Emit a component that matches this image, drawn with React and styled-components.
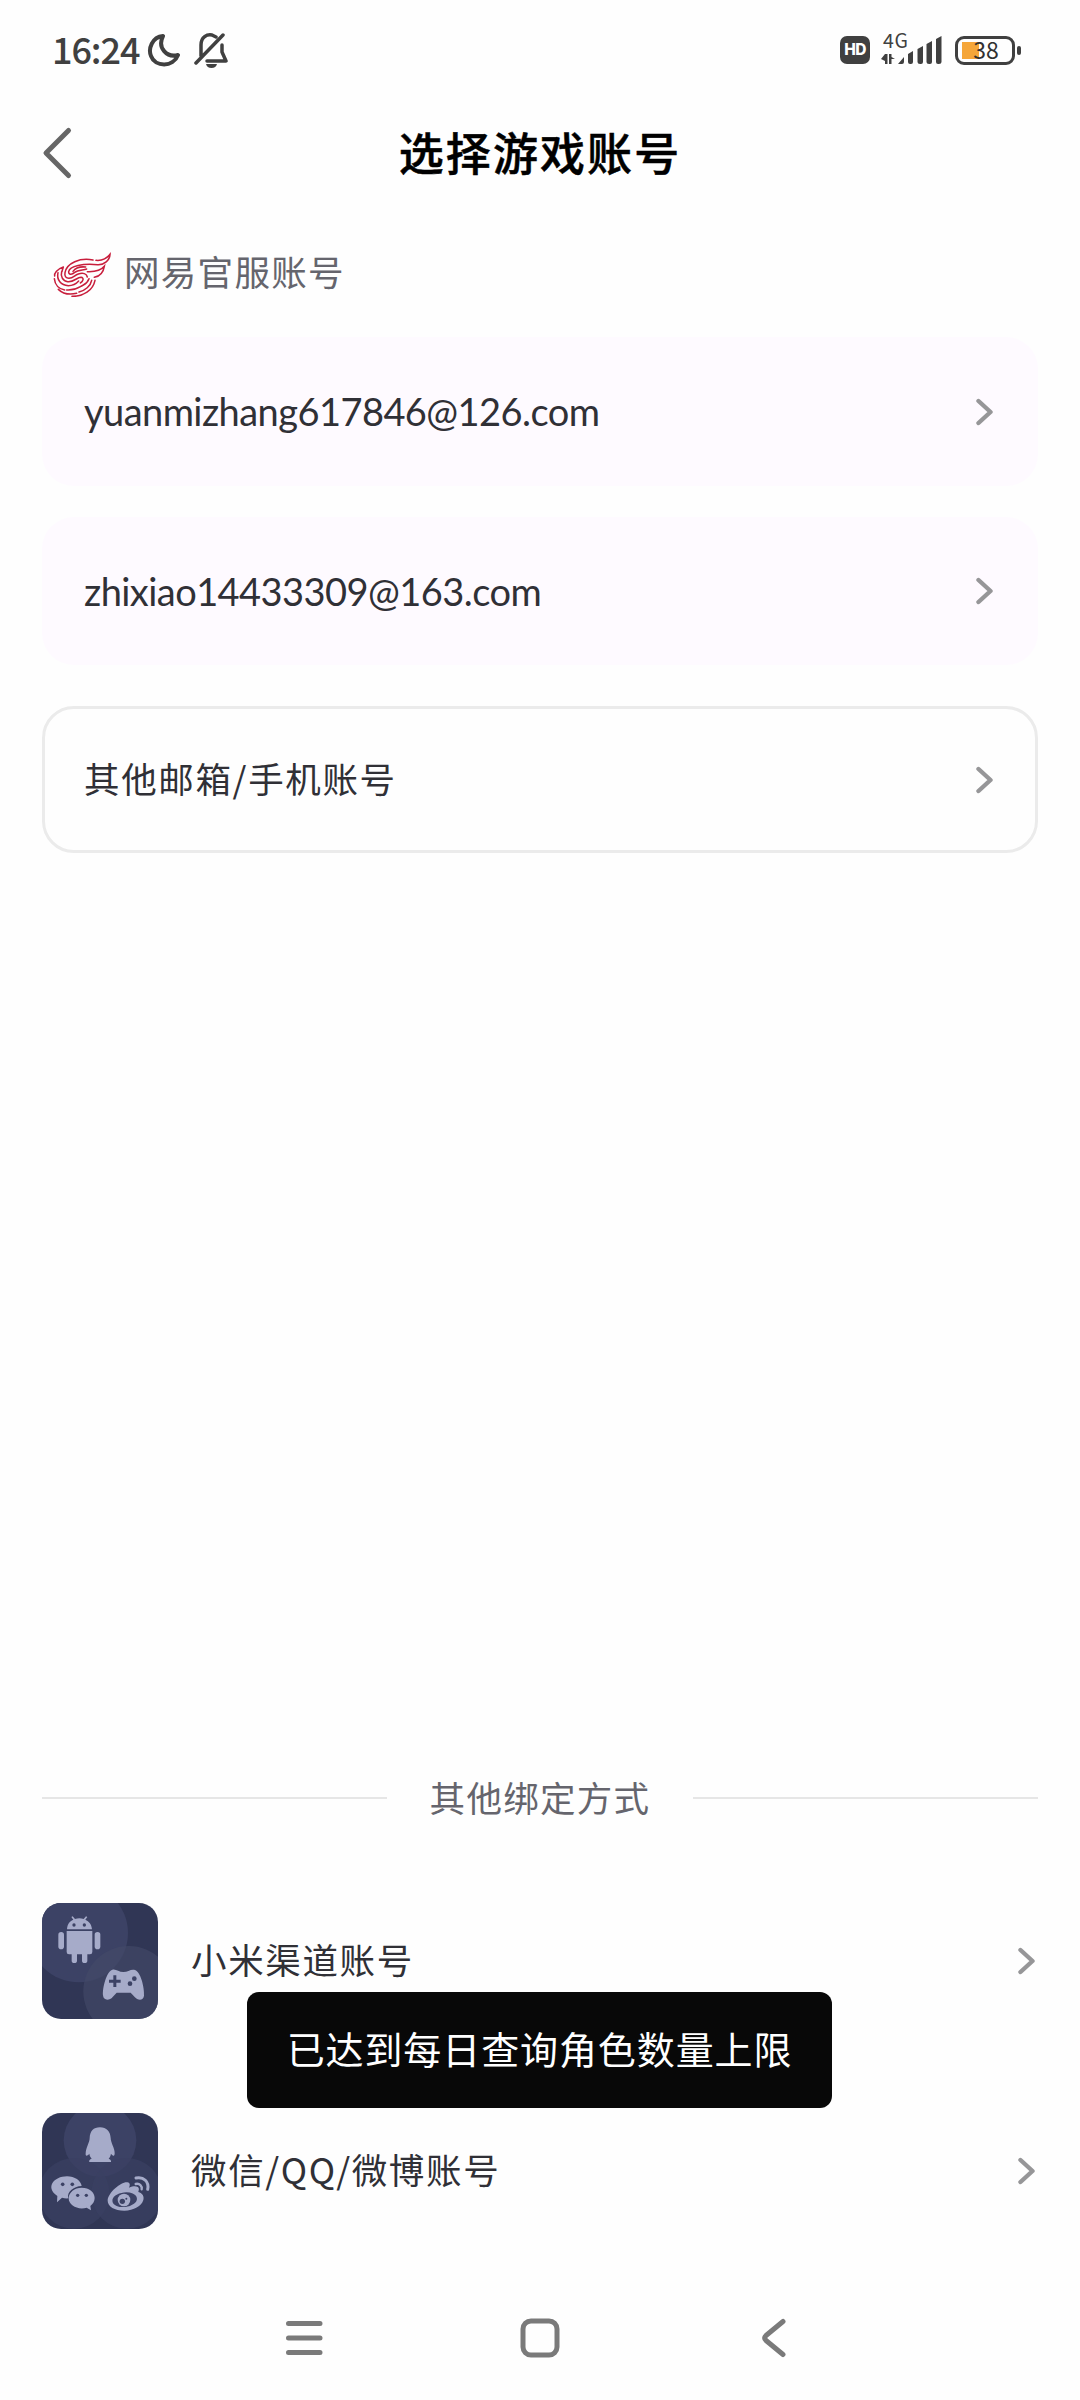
import React from "react";
import styled, { createGlobalStyle } from "styled-components";

const GlobalStyle = createGlobalStyle`
  * { box-sizing: border-box; }
  body {
    margin: 0;
    background: #fefefe;
    font-family: Lato, "Noto Sans CJK SC", sans-serif;
    color: #303036;
  }
`;

const Screen = styled.div`
  position: relative;
  display: flex;
  flex-direction: column;
  width: 1080px;
  height: 2400px;
  overflow: hidden;
  background: #fefefe;
`;

const StatusBar = styled.header`
  display: flex;
  align-items: center;
  justify-content: space-between;
  height: 100px;
  padding: 0 59px 0 52px;
  color: #404040;
`;

const StatusGroup = styled.div`
  display: flex;
  align-items: center;
`;

const Clock = styled.span`
  width: 95px;
  margin-top: -4px;
  font: 500 36px/44px "Noto Sans CJK SC", sans-serif;
  letter-spacing: -1.1px;
  white-space: nowrap;
`;

const StatusIcon = styled.svg`
  flex: none;
  width: ${(p) => p.$w}px;
  height: ${(p) => p.$h}px;
  margin-left: ${(p) => p.$ml || 0}px;
`;

const HdBadge = styled.span`
  display: flex;
  align-items: center;
  justify-content: center;
  width: 30px;
  height: 28px;
  margin-left: -1px;
  border-radius: 7px;
  background: #404040;
  color: #fff;
  font: 800 15.5px/28px Inter, sans-serif;
  letter-spacing: -0.6px;
`;

const Signal = styled.div`
  display: flex;
  flex-direction: column;
  width: 61px;
  height: 36px;
  margin: 0 13px 0 11px;
`;

const NetworkLabel = styled.span`
  height: 3px;
  margin-top: -2px;
  margin-bottom: 2px;
  padding-left: 2px;
  font: 400 19.5px/19px "Noto Sans CJK SC", sans-serif;
  letter-spacing: 0.6px;
`;

const Battery = styled.div`
  display: flex;
  align-items: center;
`;

const BatteryBody = styled.div`
  display: flex;
  align-items: center;
  justify-content: center;
  width: 60px;
  height: 29px;
  padding: 0 0 2px 2px;
  border: 3px solid #404040;
  border-radius: 9px;
  background: linear-gradient(#f5a63a, #f5a63a) 4px 3px / 17px 17px no-repeat;
  color: #303030;
  font: 400 23px/21px "Noto Sans CJK SC", sans-serif;
`;

const BatteryTip = styled.span`
  width: 4px;
  height: 9px;
  margin-left: 2px;
  border-radius: 2px;
  background: #404040;
`;

const TitleBar = styled.div`
  display: grid;
  grid-template-columns: 120px 1fr 120px;
  align-items: center;
  height: 106px;
  padding: 0 40px;
`;

const Title = styled.h1`
  margin: -3px 0 0;
  text-align: center;
  color: #000;
  font: 500 45px/60px "Noto Sans CJK SC", sans-serif;
  letter-spacing: 2.1px;
  -webkit-text-stroke: 0.5px #000;
`;

const SectionHead = styled.div`
  display: flex;
  align-items: center;
  height: 130px;
  padding: 6px 0 0 52px;
`;

const SectionTitle = styled.h2`
  margin: -7px 0 0 12px;
  color: #65656d;
  font: 400 35.5px/50px "Noto Sans CJK SC", sans-serif;
  letter-spacing: 1.3px;
`;

const Accounts = styled.main`
  display: flex;
  flex-direction: column;
  padding: 1px 42px 0;
  height: 1412px;
`;

const Card = styled.div`
  display: flex;
  align-items: center;
  justify-content: space-between;
  height: ${(p) => p.$h}px;
  margin-bottom: ${(p) => p.$gap || 0}px;
  padding: ${(p) => (p.$outlined ? "0 39px" : "0 42px")};
  border: ${(p) => (p.$outlined ? "3px solid #ebebeb" : "0")};
  border-radius: 32px;
  background: ${(p) => (p.$outlined ? "#fefefe" : "#fefaff")};
`;

const Email = styled.span`
  margin-top: -1px;
  font: 400 38px/50px Lato, sans-serif;
  letter-spacing: -0.55px;
  white-space: nowrap;
`;

const Label = styled.span`
  margin-top: -4px;
  font: 400 35.5px/50px "Noto Sans CJK SC", sans-serif;
  letter-spacing: 1.65px;
  white-space: nowrap;
`;

const Divider = styled.div`
  display: flex;
  align-items: center;
  justify-content: space-between;
  height: 100px;
  padding: 0 42px;
`;

const Rule = styled.span`
  width: 345px;
  height: 2px;
  background: #e6e6e6;
`;

const DividerText = styled(Label)`
  margin-top: -2px;
  color: #65656d;
  letter-spacing: 1.3px;
`;

const Methods = styled.section`
  display: flex;
  flex-direction: column;
  gap: 94px;
  padding: 55px 42px 0;
`;

const Method = styled.div`
  display: flex;
  align-items: center;
  height: 116px;
`;

const Tile = styled.svg`
  flex: none;
  width: 116px;
  height: 116px;
  margin-right: 33px;
  border-radius: 19px;
  background: #303655;
`;

const MethodLabel = styled(Label)`
  flex: 1;
`;

const Toast = styled.div`
  position: absolute;
  left: 247px;
  top: 1992px;
  display: flex;
  align-items: center;
  justify-content: center;
  width: 585px;
  height: 116px;
  padding-bottom: 4px;
  border-radius: 12px;
  background: #080808;
  color: #fff;
  font: 400 38px/56px "Noto Sans CJK SC", sans-serif;
  letter-spacing: 0.9px;
  white-space: nowrap;
`;

const NavBar = styled.nav`
  display: grid;
  grid-template-columns: 236px 1fr 30px;
  align-items: center;
  height: 124px;
  margin-top: auto;
  padding: 0 291px 0 283px;
`;

const Chevron = () => (
  <StatusIcon $w={20} $h={30} viewBox="0 0 20 30" fill="none" stroke="#969698" strokeWidth="4.4" strokeLinecap="round" strokeLinejoin="round">
    <path d="M2.500 4 14.500 15 2.500 26" />
  </StatusIcon>
);

const FlameLogo = () => (
  <StatusIcon $w={60} $h={46} viewBox="64 36 180 138" fill="none" stroke="#c81e3c" strokeWidth="4.600" strokeLinecap="round">
    <path d="M187 63C148 55 108 72 103 101C101 112 106 118 115 118C128 118 131 109 143 105C157 100 168 104 170 114" />
    <path d="M98 84C78 91 70 104 72 111M98 84L94 97" />
    <path d="M196 64C216 66 230 56 238 46C237 64 221 78 201 77C157 73 117 80 114 98C113 108 124 108 132 100C142 92 158 94 168 90" />
    <path d="M127 97C134 87 145 82 165 84" />
    <path d="M170 98C194 99 213 92 221 82C218 100 208 112 191 115" />
    <path d="M93 98C89 112 96 126 111 128C130 130 138 115 151 115C161 116 158 127 149 132" />
    <path d="M82 101C77 123 91 139 113 140C129 140 137 134 144 126" />
    <path d="M71 119C73 139 86 151 102 153M108 153C137 155 145 144 158 138C167 133 173 125 175 119" />
    <path d="M83 151C96 164 116 168 138 163" />
    <path d="M145 159C163 155 180 141 183 124" />
    <path d="M124 172C158 173 187 154 193 124" />
  </StatusIcon>
);

const ChannelTile = () => (
  <Tile viewBox="0 0 348 348">
    <circle cx="110" cy="90" r="148" fill="#3c4265" />
    <circle cx="260" cy="265" r="136" fill="#434969" fillOpacity=".65" />
    <g fill="#a6abc9">
      <path d="M75 79C76 61 85 54 94 50L88 42 92 40 99 48Q112 44 125 48L132 40 136 42 130 50C141 55 149 63 150 79Z" />
      <path d="M74 84H151V147Q151 154 144 154H136V173Q136 180 128 180T120 173V154H105V173Q105 180 97 180T89 173V154H81Q74 154 74 147Z" />
      <rect x="49" y="87" width="17" height="52" rx="8.500" />
      <rect x="158" y="87" width="17" height="52" rx="8.500" />
      <path d="M211 200C222 197 230 207 244 207S267 197 279 201C295 205 308 254 306 278C304 295 286 292 278 282L266 269H224L212 282C203 293 184 294 183 277C181 254 194 204 211 200Z" />
    </g>
    <g fill="#3c4265">
      <circle cx="96" cy="66" r="5" /><circle cx="127" cy="66" r="5" />
      <path d="M214 217h9v13h13v9h-13v13h-9v-13h-13v-9h13z" />
      <circle cx="277" cy="227" r="7" /><circle cx="264" cy="242" r="7" />
    </g>
  </Tile>
);

const SocialTile = () => (
  <Tile viewBox="0 0 348 348">
    <circle cx="174" cy="82" r="109" fill="#3c4265" />
    <circle cx="96" cy="241" r="106" fill="#3a4063" fillOpacity=".7" />
    <circle cx="254" cy="241" r="106" fill="#3a4063" fillOpacity=".7" />
    <g fill="#a6abc9">
      <path d="M174 43C194 43 205 56 206 75C206 89 218 105 218 121C218 130 214 131 207 122C206 130 202 134 200 137C207 140 208 144 207 147H142C140 143 143 139 149 137C145 132 143 128 142 122C134 131 130 129 131 121C131 105 143 88 143 75C144 55 154 43 174 43Z" />
      <path d="M75 190C98 190 117 203 119 219C94 220 74 237 79 256Q69 257 60 254L45 268 46 249C9 224 35 190 75 190Z" />
      <path d="M119 224C142 224 158 238 158 255C158 265 153 273 145 279L147 292 134 284C109 292 80 278 80 256C80 238 98 224 119 224Z" />
      <path d="M256 208C266 209 264 219 261 224C276 217 287 219 290 225C292 230 289 234 289 237C302 241 307 250 304 261C299 279 275 293 247 293C218 293 197 280 197 263C198 238 239 205 256 208Z" />
    </g>
    <g fill="#3c4265">
      <circle cx="62" cy="214" r="5.500" /><circle cx="91" cy="214" r="5.500" />
      <circle cx="107" cy="247" r="5" /><circle cx="133" cy="247" r="5" />
      <ellipse cx="248" cy="260" rx="37" ry="22" transform="rotate(-7 248 260)" />
    </g>
    <circle cx="246" cy="261" r="19" fill="#a6abc9" />
    <circle cx="241" cy="265" r="8" fill="#3c4265" />
    <circle cx="253" cy="257" r="3" fill="#3c4265" />
    <g fill="none" stroke="#a6abc9" strokeLinecap="round" strokeWidth="9">
      <path d="M282 195C305 190 322 207 317 229" />
      <path d="M281 213C293 210 301 219 299 229" strokeWidth="7" />
    </g>
  </Tile>
);

export default function App() {
  return (
    <>
      <GlobalStyle />
      <Screen>
        <StatusBar>
          <StatusGroup>
            <Clock>16:24</Clock>
            <StatusIcon $w={34} $h={36} viewBox="0 0 34 36" fill="none" stroke="#404040" strokeWidth="4" strokeLinejoin="round">
              <path d="M16 4C5 5 1 17 4 24C8 35 26 36 31 23C20 26 10 16 16 4Z" />
            </StatusIcon>
            <StatusIcon $w={36} $h={38} $ml={13} viewBox="0 0 36 38" fill="none" stroke="#404040" strokeWidth="3.5" strokeLinecap="round" strokeLinejoin="round">
              <path d="M2 32 29 4M7 25V14C7 6 13 3 18 4L22 6M28 14V21L32 30H13" />
              <path d="M12 33H23Q22 37 17.500 37T12 33Z" fill="#404040" stroke="none" />
            </StatusIcon>
          </StatusGroup>
          <StatusGroup>
            <HdBadge>HD</HdBadge>
            <Signal>
              <NetworkLabel>4G</NetworkLabel>
              <StatusIcon $w={61} $h={31} viewBox="0 0 61 31" fill="#404040">
                <path d="M4 19H6.500V29H4V26L0 24ZM8 19H10.500V22L14 24H10.500V29H8ZM17 29 23 22V27Q23 29 21 29Z" />
                <path d="M27 19 32 16V27Q32 29 30 29H29Q27 29 27 27ZM36.500 14 42 11V27Q42 29 40 29H39Q36.500 29 36.500 27ZM45.500 9 51 6V27Q51 29 49 29H48Q45.500 29 45.500 27ZM55 4 60.500 1V27Q60.500 29 58 29H57Q55 29 55 27Z" />
              </StatusIcon>
            </Signal>
            <Battery>
              <BatteryBody>38</BatteryBody>
              <BatteryTip />
            </Battery>
          </StatusGroup>
        </StatusBar>

        <TitleBar>
          <StatusIcon $w={34} $h={56} viewBox="0 0 34 56" fill="none" stroke="#666" strokeWidth="5" strokeLinecap="round" strokeLinejoin="round">
            <path d="M28.500 5.500 6 28 28.500 50.500" />
          </StatusIcon>
          <Title>选择游戏账号</Title>
        </TitleBar>

        <SectionHead>
          <FlameLogo />
          <SectionTitle>网易官服账号</SectionTitle>
        </SectionHead>

        <Accounts>
          <Card $h={149} $gap={31}>
            <Email>yuanmizhang617846@126.com</Email>
            <Chevron />
          </Card>
          <Card $h={148} $gap={41}>
            <Email>zhixiao14433309@163.com</Email>
            <Chevron />
          </Card>
          <Card $h={147} $outlined>
            <Label>其他邮箱/手机账号</Label>
            <Chevron />
          </Card>
        </Accounts>

        <Divider>
          <Rule />
          <DividerText>其他绑定方式</DividerText>
          <Rule />
        </Divider>

        <Methods>
          <Method>
            <ChannelTile />
            <MethodLabel>小米渠道账号</MethodLabel>
            <Chevron />
          </Method>
          <Method>
            <SocialTile />
            <MethodLabel>微信/QQ/微博账号</MethodLabel>
            <Chevron />
          </Method>
        </Methods>

        <Toast role="status">已达到每日查询角色数量上限</Toast>

        <NavBar>
          <StatusIcon $w={42} $h={42} viewBox="0 0 42 42" fill="none" stroke="#7a7a7a" strokeWidth="5" strokeLinecap="round">
            <path d="M5.500 6.500H37M5.500 21H37M5.500 35.500H37" />
          </StatusIcon>
          <StatusIcon $w={42} $h={42} viewBox="0 0 42 42" fill="none" stroke="#7a7a7a" strokeWidth="5">
            <rect x="4" y="4" width="34" height="34" rx="8" />
          </StatusIcon>
          <StatusIcon $w={30} $h={42} viewBox="0 0 30 42" fill="none" stroke="#7a7a7a" strokeWidth="5" strokeLinecap="round" strokeLinejoin="round">
            <path d="M24 4.500 7 18.500Q4.500 21 7 23.500L24 37.500" />
          </StatusIcon>
        </NavBar>
      </Screen>
    </>
  );
}
